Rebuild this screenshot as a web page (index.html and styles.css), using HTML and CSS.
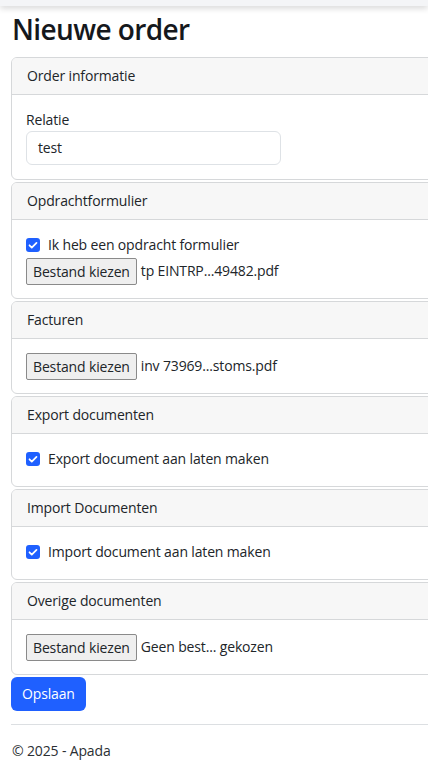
FILE: index.html
```html
<!DOCTYPE html>
<html lang="nl">
<head>
<meta charset="utf-8">
<title>Nieuwe order</title>
<link rel="stylesheet" href="styles.css">
</head>
<body>
<div class="topbar"></div>
<main class="page">
  <h1 class="title">Nieuwe order</h1>
  <form class="order-form">
    <section class="card">
      <div class="card-header">Order informatie</div>
      <div class="card-body">
        <label class="field-label">Relatie</label>
        <div class="text-input">test</div>
      </div>
    </section>
    <section class="card">
      <div class="card-header">Opdrachtformulier</div>
      <div class="card-body">
        <div class="check-row">
          <span class="checkbox"><svg viewBox="0 0 16 16" width="14" height="14"><path d="M4 8.3l2.6 2.6L12 5.5" fill="none" stroke="#fff" stroke-width="2" stroke-linecap="round" stroke-linejoin="round"/></svg></span>
          <span>Ik heb een opdracht formulier</span>
        </div>
        <div class="file-input"><span class="file-btn">Bestand kiezen</span><span class="file-name">tp EINTRP...49482.pdf</span></div>
      </div>
    </section>
    <section class="card">
      <div class="card-header">Facturen</div>
      <div class="card-body">
        <div class="file-input"><span class="file-btn">Bestand kiezen</span><span class="file-name">inv 73969...stoms.pdf</span></div>
      </div>
    </section>
    <section class="card">
      <div class="card-header">Export documenten</div>
      <div class="card-body">
        <div class="check-row">
          <span class="checkbox"><svg viewBox="0 0 16 16" width="14" height="14"><path d="M4 8.3l2.6 2.6L12 5.5" fill="none" stroke="#fff" stroke-width="2" stroke-linecap="round" stroke-linejoin="round"/></svg></span>
          <span>Export document aan laten maken</span>
        </div>
      </div>
    </section>
    <section class="card">
      <div class="card-header">Import Documenten</div>
      <div class="card-body">
        <div class="check-row">
          <span class="checkbox"><svg viewBox="0 0 16 16" width="14" height="14"><path d="M4 8.3l2.6 2.6L12 5.5" fill="none" stroke="#fff" stroke-width="2" stroke-linecap="round" stroke-linejoin="round"/></svg></span>
          <span>Import document aan laten maken</span>
        </div>
      </div>
    </section>
    <section class="card">
      <div class="card-header">Overige documenten</div>
      <div class="card-body">
        <div class="file-input"><span class="file-btn">Bestand kiezen</span><span class="file-name">Geen best... gekozen</span></div>
      </div>
    </section>
    <div class="actions"><button type="button" class="btn-primary">Opslaan</button></div>
  </form>
</main>
<footer class="footer">
  <div class="footer-inner">© 2025 - Apada</div>
</footer>
</body>
</html>
```
FILE: styles.css
```css
html, body {
  margin: 0;
  padding: 0;
  overflow-x: hidden;
}
body {
  font-family: "Open Sans", "Noto Sans", sans-serif;
  font-size: 14px;
  letter-spacing: -0.15px;
  line-height: 22px;
  color: #212529;
  background: #fff;
}
.topbar {
  height: 6px;
  background: #f4f5f7;
  box-shadow: 0 2px 6px rgba(0, 0, 0, 0.18);
}
.page {
  padding-left: 11px;
  width: 440px;
}
.title {
  margin: 6px 0 11px 1px;
  font-size: 28px;
  line-height: 34px;
  font-weight: 600;
  letter-spacing: -0.6px;
  color: #15181c;
}
.order-form {
  display: flex;
  flex-direction: column;
}
.card {
  border: 1px solid #d6d8da;
  border-radius: 6px;
  margin-bottom: 2px;
  background: #fff;
}
.card-header {
  background: #f7f7f7;
  border-bottom: 1px solid #d6d8da;
  border-radius: 5px 5px 0 0;
  padding: 7px 15px;
  height: 22px;
}
.card-body {
  padding: 14px 14px;
}
.field-label {
  display: block;
  height: 22px;
}
.text-input {
  box-sizing: border-box;
  width: 255px;
  height: 34px;
  border: 1px solid #dee2e6;
  border-radius: 6px;
  padding: 5px 11px;
}
.check-row {
  display: flex;
  align-items: center;
  gap: 8px;
  height: 22px;
  margin-bottom: 2px;
}
.checkbox {
  width: 14px;
  height: 14px;
  border-radius: 3px;
  background: #1f60ff;
  display: flex;
}
.file-input {
  display: flex;
  align-items: center;
  gap: 4px;
  height: 26px;
}
.file-btn {
  box-sizing: border-box;
  height: 27px;
  padding: 2px 6px;
  background: #efefef;
  border: 1px solid #8a8a8a;
  border-radius: 2px;
  line-height: 21px;
}
.btn-primary {
  font-family: inherit;
  font-size: 14px;
  letter-spacing: -0.15px;
  line-height: 22px;
  color: #fff;
  background: #1f60ff;
  border: 0;
  border-radius: 6px;
  padding: 6px 11px;
  height: 34px;
}
.footer {
  margin-top: 13px;
  padding-left: 11px;
}
.footer-inner {
  border-top: 1px solid #dcdfe2;
  padding-top: 15px;
  padding-left: 1px;
  line-height: 22px;
  color: #2b2f33;
  width: 440px;
}
```
